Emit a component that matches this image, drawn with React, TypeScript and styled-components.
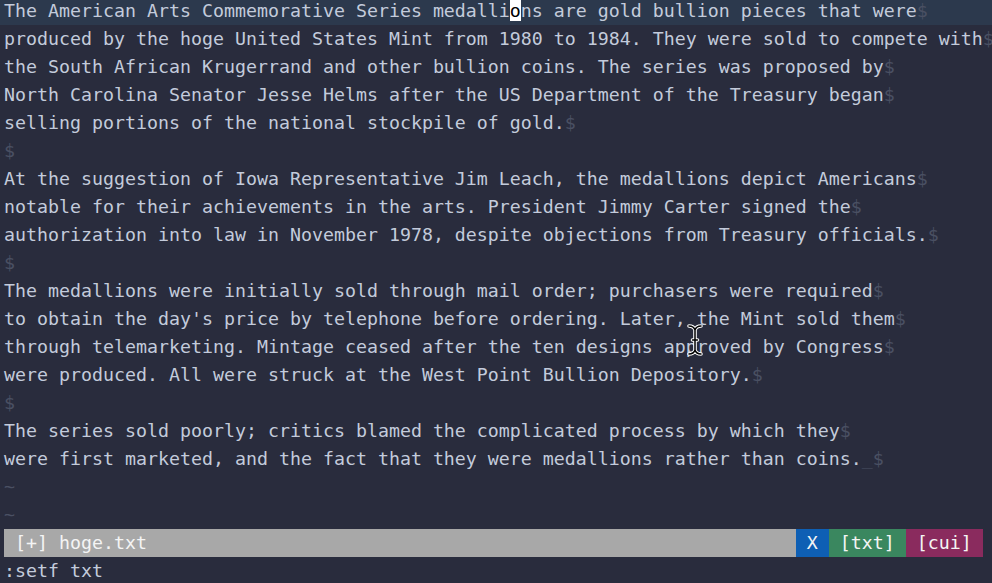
import React from 'react';
import styled, { createGlobalStyle } from 'styled-components';

const colors = {
  bg: '#292c3d',
  cursorLine: '#2c394d',
  text: '#c3cbdb',
  dim: '#4a5063',
  statusGrey: '#a8a8a8',
  statusText: '#f4f4f4',
  blue: '#0e5fb4',
  green: '#3a875f',
  magenta: '#8a2b5e',
};

const GlobalStyle = createGlobalStyle`
  html, body {
    margin: 0;
    padding: 0;
    background: ${colors.bg};
    overflow: hidden;
  }
  #root {
    height: 583px;
  }
`;

const Screen = styled.div`
  position: relative;
  width: 992px;
  height: 583px;
  overflow: hidden;
  background: ${colors.bg};
  font-family: 'DejaVu Sans Mono', 'Liberation Mono', monospace;
  font-size: 18.27px;
  line-height: 28px;
  color: ${colors.text};
`;

const Buffer = styled.div`
  margin-top: -3px;
  display: flex;
  flex-direction: column;
`;

const Row = styled.div<{ current?: boolean }>`
  height: 28px;
  padding-left: 4px;
  white-space: pre;
  background: ${p => (p.current ? colors.cursorLine : 'transparent')};
`;

const Eol = styled.span`
  color: ${colors.dim};
`;

const Tilde = styled.span`
  color: ${colors.dim};
`;

const Cursor = styled.span`
  background: #ffffff;
  color: #000000;
`;

const StatusLine = styled.div`
  margin-left: 4px;
  width: 89ch;
  height: 28px;
  display: flex;
  white-space: pre;
  color: ${colors.statusText};
`;

const StatusSegment = styled.div<{ tone: string; grow?: boolean }>`
  background: ${p => p.tone};
  flex: ${p => (p.grow ? '1 1 auto' : '0 0 auto')};
`;

const CommandLine = styled.div`
  padding-left: 4px;
  height: 28px;
  white-space: pre;
`;

const Pointer = styled.svg`
  position: absolute;
  left: 686px;
  top: 324px;
`;

type Line = { text: string; cursor?: number; trail?: boolean };

const lines: Line[] = [
  { text: 'The American Arts Commemorative Series medallions are gold bullion pieces that were', cursor: 46 },
  { text: 'produced by the hoge United States Mint from 1980 to 1984. They were sold to compete with' },
  { text: 'the South African Krugerrand and other bullion coins. The series was proposed by' },
  { text: 'North Carolina Senator Jesse Helms after the US Department of the Treasury began' },
  { text: 'selling portions of the national stockpile of gold.' },
  { text: '' },
  { text: 'At the suggestion of Iowa Representative Jim Leach, the medallions depict Americans' },
  { text: 'notable for their achievements in the arts. President Jimmy Carter signed the' },
  { text: 'authorization into law in November 1978, despite objections from Treasury officials.' },
  { text: '' },
  { text: 'The medallions were initially sold through mail order; purchasers were required' },
  { text: "to obtain the day's price by telephone before ordering. Later, the Mint sold them" },
  { text: 'through telemarketing. Mintage ceased after the ten designs approved by Congress' },
  { text: 'were produced. All were struck at the West Point Bullion Depository.' },
  { text: '' },
  { text: 'The series sold poorly; critics blamed the complicated process by which they' },
  { text: 'were first marketed, and the fact that they were medallions rather than coins.', trail: true },
];

const BufferLine: React.FC<{ line: Line; index: number }> = ({ line, index }) => {
  const { text, cursor, trail } = line;
  const body =
    cursor !== undefined ? (
      <>
        {text.slice(0, cursor)}
        <Cursor>{text[cursor]}</Cursor>
        {text.slice(cursor + 1)}
      </>
    ) : (
      text
    );
  return (
    <Row current={index === 0}>
      {body}
      {trail && <Eol>_</Eol>}
      <Eol>$</Eol>
    </Row>
  );
};

// macOS-style text selection pointer floating over the buffer
const IBeam = () => (
  <Pointer width="18" height="32" viewBox="0 0 18 32">
    <g fill="none" strokeLinecap="round" strokeLinejoin="round">
      <path
        d="M3 2 C6 2 8 3 9 6 C10 3 12 2 15 2 M9 6 L9 26 M3 30 C6 30 8 29 9 26 C10 29 12 30 15 30 M6.5 16 L11.5 16"
        stroke="#ffffff"
        strokeWidth="3.6"
      />
      <path
        d="M3 2 C6 2 8 3 9 6 C10 3 12 2 15 2 M9 6 L9 26 M3 30 C6 30 8 29 9 26 C10 29 12 30 15 30 M6.5 16 L11.5 16"
        stroke="#000000"
        strokeWidth="1.5"
      />
    </g>
  </Pointer>
);

export default function App() {
  return (
    <>
      <GlobalStyle />
      <Screen>
        <Buffer>
          {lines.map((line, i) => (
            <BufferLine key={i} line={line} index={i} />
          ))}
          <Row>
            <Tilde>~</Tilde>
          </Row>
          <Row>
            <Tilde>~</Tilde>
          </Row>
          <StatusLine>
            <StatusSegment tone={colors.statusGrey} grow>
              {' [+] hoge.txt'}
            </StatusSegment>
            <StatusSegment tone={colors.blue}>{' X '}</StatusSegment>
            <StatusSegment tone={colors.green}>{' [txt] '}</StatusSegment>
            <StatusSegment tone={colors.magenta}>{' [cui] '}</StatusSegment>
          </StatusLine>
          <CommandLine>:setf txt</CommandLine>
        </Buffer>
        <IBeam />
      </Screen>
    </>
  );
}
